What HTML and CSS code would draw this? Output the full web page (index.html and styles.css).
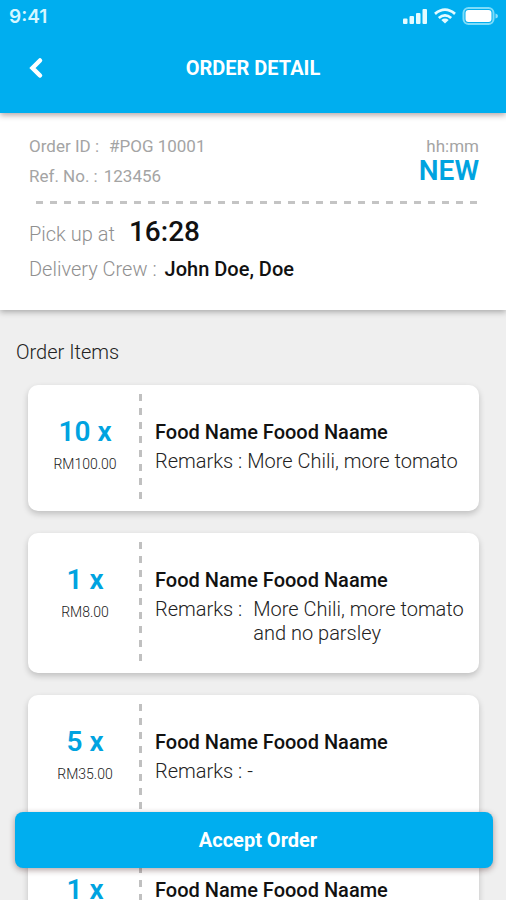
FILE: index.html
```html
<!DOCTYPE html>
<html lang="en">
<head>
<meta charset="utf-8">
<meta name="viewport" content="width=device-width, initial-scale=1">
<title>Order Detail</title>
<link rel="stylesheet" href="styles.css">
</head>
<body>
<div class="app">
  <header class="header">
    <div class="status">
      <span class="clock">9:41</span>
      <svg class="status-icons" width="97" height="20" viewBox="0 0 97 20" fill="#e4fbff" aria-hidden="true">
        <rect x="2" y="12.500" width="4.500" height="5.500" rx="1"/>
        <rect x="8.500" y="10" width="4.500" height="8" rx="1"/>
        <rect x="15" y="7" width="4.500" height="11" rx="1"/>
        <rect x="21.500" y="3" width="4.500" height="15" rx="1"/>
        <g fill="none" stroke="#e4fbff" stroke-width="2.800">
          <path d="M34 7.800Q44 -0.500 54 7.800"/>
          <path d="M37.800 12Q44 6.800 50.200 12"/>
        </g>
        <path d="M40.300 13.900Q44 11 47.700 13.900L44 17.600Z"/>
        <rect x="62.500" y="2" width="30" height="16" rx="5" fill="none" stroke="#7ddcf9" stroke-width="2"/>
        <rect x="64.500" y="4" width="26" height="12" rx="3" fill="#fff"/>
        <path d="M94.500 7.500Q97 8 97 10T94.500 12.500Z" fill="#8be0fb"/>
      </svg>
    </div>
    <nav class="nav">
      <button class="back" type="button" aria-label="Back">
        <svg width="16" height="22" viewBox="0 0 16 22" fill="none" stroke="#fff" stroke-width="4.500" stroke-linecap="round" aria-hidden="true"><path d="M12 3.500L4.500 11L12 18.500"/></svg>
      </button>
      <h1 class="title">ORDER DETAIL</h1>
    </nav>
  </header>

  <section class="summary">
    <div class="summary-top">
      <dl class="ids">
        <div class="pair"><dt>Order ID :</dt><dd class="order-id">#POG 10001</dd></div>
        <div class="pair"><dt>Ref. No. :</dt><dd>123456</dd></div>
      </dl>
      <div class="state">
        <span class="time">hh:mm</span>
        <strong class="state-name">NEW</strong>
      </div>
    </div>
    <div class="rule"></div>
    <dl class="delivery">
      <div class="pair"><dt>Pick up at</dt><dd class="pickup">16:28</dd></div>
      <div class="pair"><dt>Delivery Crew :</dt><dd class="crew">John Doe, Doe</dd></div>
    </dl>
  </section>

  <main class="items">
    <h2 class="items-title">Order Items</h2>
    <ul class="list">
      <li class="card">
        <div class="amount"><strong class="qty">10 x</strong><span class="price">RM100.00</span></div>
        <div class="food"><h3 class="name">Food Name Foood Naame</h3>
          <div class="remarks"><span>Remarks :</span><p>More Chili, more tomato</p></div></div>
      </li>
      <li class="card">
        <div class="amount"><strong class="qty">1 x</strong><span class="price">RM8.00</span></div>
        <div class="food"><h3 class="name">Food Name Foood Naame</h3>
          <div class="remarks remarks-long"><span>Remarks :</span><p>More Chili, more tomato and no parsley</p></div></div>
      </li>
      <li class="card">
        <div class="amount"><strong class="qty">5 x</strong><span class="price">RM35.00</span></div>
        <div class="food"><h3 class="name">Food Name Foood Naame</h3>
          <div class="remarks"><span>Remarks :</span><p>-</p></div></div>
      </li>
      <li class="card">
        <div class="amount"><strong class="qty">1 x</strong></div>
        <div class="food"><h3 class="name">Food Name Foood Naame</h3></div>
      </li>
    </ul>
  </main>
  <button class="accept" type="button">Accept Order</button>
</div>
</body>
</html>
```
FILE: styles.css
```css
* { box-sizing: border-box; }

body, h1, h2, h3, p, dl, dd, ul {
  margin: 0;
  padding: 0;
}

body {
  background: #efefef;
  color: #111;
  font-family: Roboto, "Liberation Sans", sans-serif;
}

button {
  border: 0;
  font-family: inherit;
  cursor: pointer;
}

.app {
  position: relative;
  display: flex;
  flex-direction: column;
  height: 100vh;
  overflow: hidden;
}

.header {
  position: relative;
  z-index: 1;
  padding-bottom: 15px;
  background: #00aeef;
  box-shadow: 0 2px 6px rgba(60, 20, 20, 0.4);
  color: #fff;
}

.status {
  display: flex;
  align-items: center;
  justify-content: space-between;
  height: 32px;
  padding: 0 8px 0 9px;
}

.clock {
  color: #d5f6ff;
  font-family: Inter, sans-serif;
  font-size: 19px;
  font-weight: 600;
}

.nav {
  display: grid;
  grid-template-columns: 44px 1fr 44px;
  align-items: center;
  height: 60px;
  margin-top: 6px;
  padding: 0 14px;
}

.back {
  display: flex;
  align-items: center;
  justify-content: center;
  height: 44px;
  padding: 0;
  background: none;
}

.title {
  font-size: 20px;
  font-weight: 700;
  line-height: 24px;
  text-align: center;
}

.summary {
  padding: 18px 27px 23px 29px;
  background: #fff;
  box-shadow: 0 2px 6px rgba(0, 0, 0, 0.3);
}

.summary-top {
  display: flex;
  justify-content: space-between;
}

.pair {
  display: flex;
  align-items: baseline;
}

.ids {
  color: #a4a4a4;
  font-size: 17px;
  line-height: 30px;
}

.ids dd { margin-left: 6px; }
.ids .order-id { margin-left: 10px; }

.state {
  display: flex;
  flex-direction: column;
  align-items: flex-end;
  padding-top: 4px;
}

.time {
  color: #a4a4a4;
  font-size: 17px;
  line-height: 22px;
}

.state-name {
  color: #00a3e0;
  font-size: 28px;
  font-weight: 600;
  line-height: 28px;
}

.rule {
  height: 3px;
  margin: 10px 0 10px 7px;
  background: repeating-linear-gradient(90deg, #c4c4c4 0 7px, transparent 7px 14px);
}

.delivery {
  font-size: 20px;
  line-height: 35px;
}

.delivery dt {
  color: #909090;
  font-weight: 300;
}

.pickup {
  margin-left: 14px;
  font-size: 28px;
  font-weight: 500;
}

.crew {
  margin-left: 8px;
  font-weight: 500;
}

.items { padding: 30px 27px 0 28px; }

.items-title {
  margin-left: -12px;
  color: #222;
  font-size: 20px;
  font-weight: 300;
  line-height: 24px;
}

.list {
  display: grid;
  gap: 22px;
  margin-top: 21px;
  list-style: none;
}

.card {
  display: grid;
  grid-template-columns: 114px 1fr;
  min-height: 126px;
  border-radius: 10px;
  background: #fff;
  box-shadow: 0 3px 6px rgba(0, 0, 0, 0.2);
}

.amount {
  display: flex;
  flex-direction: column;
  align-items: center;
  padding-top: 32px;
  background: repeating-linear-gradient(#c0c0c0 0 7px, transparent 7px 14px) right 9px / 3px calc(100% - 20px) no-repeat;
}

.qty {
  color: #00a3e0;
  font-size: 28px;
  font-weight: 600;
  line-height: 30px;
}

.price {
  margin-top: 9px;
  color: #222;
  font-size: 14px;
  font-weight: 300;
  line-height: 16px;
}

.food { padding: 35px 8px 28px 13px; }

.name {
  font-size: 20px;
  font-weight: 500;
  line-height: 24px;
}

.remarks {
  display: flex;
  gap: 5px;
  margin-top: 5px;
  color: #222;
  font-size: 20px;
  font-weight: 300;
  line-height: 24px;
}

.remarks span { flex: none; }
.remarks-long { gap: 11px; }

.accept {
  position: absolute;
  right: 13px;
  bottom: 32px;
  left: 15px;
  height: 56px;
  padding: 0 0 0 8px;
  border-radius: 8px;
  background: #00aeef;
  box-shadow: 0 2px 6px rgba(60, 20, 20, 0.4);
  color: #fff;
  font-size: 20px;
  font-weight: 700;
}
```
